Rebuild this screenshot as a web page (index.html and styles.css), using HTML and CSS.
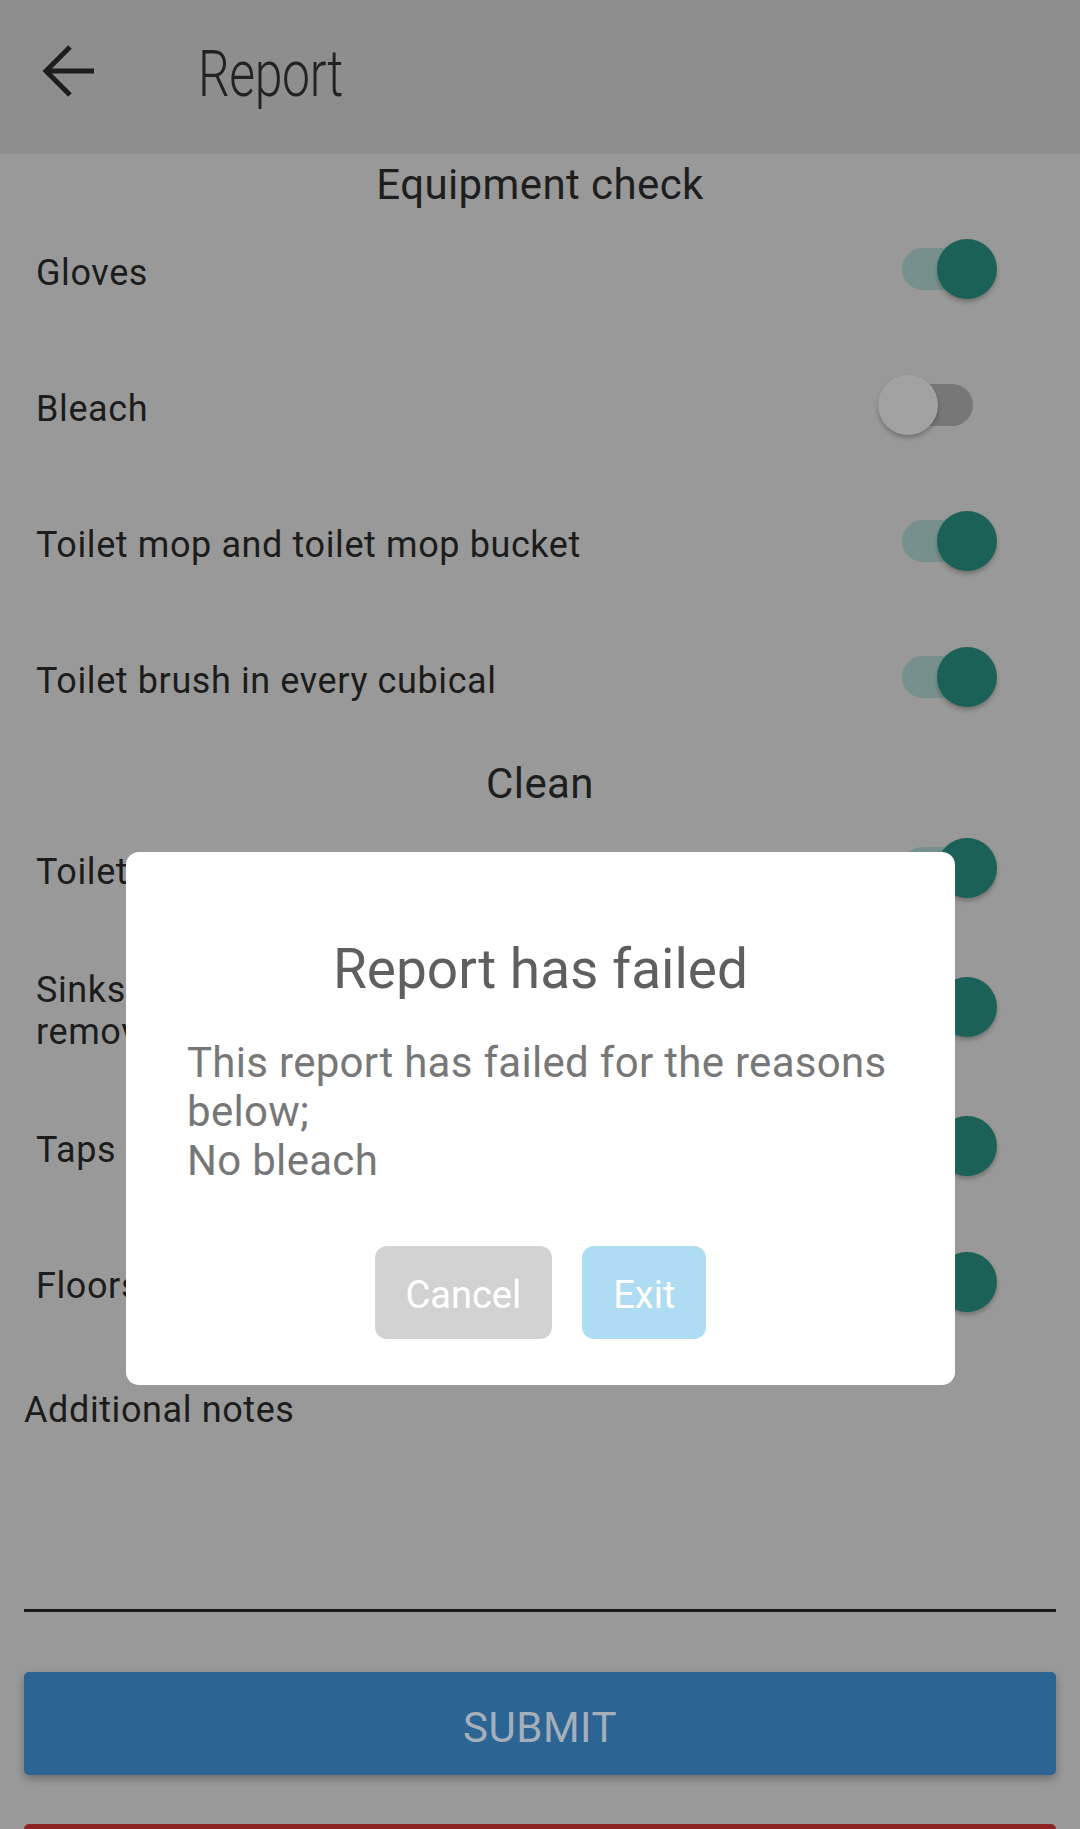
FILE: index.html
```html
<!DOCTYPE html>
<html lang="en">
<head>
<meta charset="utf-8">
<title>Report</title>
<link rel="stylesheet" href="styles.css">
</head>
<body>
<div class="screen">
  <header class="appbar">
    <svg class="back" width="56" height="56" viewBox="0 0 56 56" aria-hidden="true">
      <path d="M4 28 H53 M29 4 L5 28 L29 52" fill="none" stroke="#1d1d1d" stroke-width="5" stroke-linecap="butt" stroke-linejoin="miter"/>
    </svg>
    <h1 class="title">Report</h1>
  </header>

  <main class="content">
    <h2 class="section first">Equipment check</h2>
    <div class="row"><span class="label">Gloves</span><span class="switch on"><span class="track"></span><span class="thumb"></span></span></div>
    <div class="row"><span class="label">Bleach</span><span class="switch off"><span class="track"></span><span class="thumb"></span></span></div>
    <div class="row"><span class="label">Toilet mop and toilet mop bucket</span><span class="switch on"><span class="track"></span><span class="thumb"></span></span></div>
    <div class="row"><span class="label">Toilet brush in every cubical</span><span class="switch on"><span class="track"></span><span class="thumb"></span></span></div>

    <h2 class="section">Clean</h2>
    <div class="row"><span class="label">Toilets</span><span class="switch on"><span class="track"></span><span class="thumb"></span></span></div>
    <div class="row tall"><span class="label">Sinks<br>removed</span><span class="switch on"><span class="track"></span><span class="thumb"></span></span></div>
    <div class="row"><span class="label">Taps c</span><span class="switch on"><span class="track"></span><span class="thumb"></span></span></div>
    <div class="row"><span class="label">Floors</span><span class="switch on"><span class="track"></span><span class="thumb"></span></span></div>

    <div class="notes">
      <div class="notes-label">Additional notes</div>
      <div class="notes-field"></div>
    </div>

    <div class="submit">SUBMIT</div>
    <div class="danger"></div>
  </main>

  <div class="dialog" role="dialog">
    <h3 class="dialog-title">Report has failed</h3>
    <p class="dialog-text">This report has failed for the reasons below;<br>No bleach</p>
    <div class="dialog-actions">
      <span class="btn btn-cancel">Cancel</span>
      <span class="btn btn-exit">Exit</span>
    </div>
  </div>
</div>
</body>
</html>
```

FILE: styles.css
```css
* { box-sizing: border-box; }

html, body {
  margin: 0;
  padding: 0;
  background: #999999;
}

body {
  font-family: Roboto, "Noto Sans", "DejaVu Sans", sans-serif;
  color: #1c1c1c;
}

.screen {
  position: relative;
  width: 1080px;
  height: 1829px;
  overflow: hidden;
  background: #999999;
}

.appbar {
  height: 154px;
  background: #8e8e8e;
  display: flex;
  align-items: center;
  padding-left: 41px;
}

.back {
  display: block;
  margin-top: -12px;
}

.title {
  margin: -4px 0 0 101px;
  font-family: Roboto, sans-serif;
  font-weight: 300;
  font-size: 64px;
  line-height: 1;
  color: #222;
  transform: scaleX(0.78);
  transform-origin: left center;
  letter-spacing: -0.5px;
}

.content {
  display: flex;
  flex-direction: column;
}

.section {
  margin: 0;
  height: 55px;
  padding-top: 17px;
  font-size: 42px;
  line-height: 42px;
  font-weight: 400;
  text-align: center;
  color: #1e1e1e;
  letter-spacing: 0.4px;
}

.section.first {
  height: 48px;
  padding-top: 10px;
}

.row {
  height: 136px;
  display: flex;
  align-items: center;
  justify-content: space-between;
  padding: 0 77px 0 36px;
}

.row.tall {
  height: 142px;
}

.label {
  font-size: 36px;
  line-height: 42px;
  padding-top: 6px;
  color: #1c1c1c;
  letter-spacing: 0.6px;
}

.switch {
  position: relative;
  width: 110px;
  height: 60px;
  flex: none;
  margin-top: -2px;
}

.switch .track {
  position: absolute;
  top: 9px;
  height: 42px;
  border-radius: 21px;
}

.switch .thumb {
  position: absolute;
  top: 0;
  width: 60px;
  height: 60px;
  border-radius: 50%;
  box-shadow: 0 3px 4px rgba(0, 0, 0, 0.25);
}

.switch.on .track {
  left: 9px;
  width: 90px;
  background: #76918d;
}

.switch.on .thumb {
  left: 44px;
  background: #1b6158;
}

.switch.off .track {
  left: -5px;
  width: 85px;
  background: #777777;
}

.switch.off .thumb {
  left: -15px;
  background: #a2a2a2;
}

.notes {
  padding: 38px 24px 0;
}

.notes-label {
  font-size: 36px;
  line-height: 42px;
  color: #1c1c1c;
  letter-spacing: 0.6px;
}

.notes-field {
  height: 181px;
  border-bottom: 3px solid #1a1a1a;
}

.submit {
  margin: 60px 24px 0;
  height: 103px;
  padding-top: 7px;
  border-radius: 5px;
  background: #2c6593;
  box-shadow: 0 4px 8px rgba(0, 0, 0, 0.28);
  display: flex;
  align-items: center;
  justify-content: center;
  font-size: 42px;
  color: #a5afba;
  letter-spacing: 0.5px;
}

.danger {
  margin: 49px 24px 0;
  height: 100px;
  border-radius: 5px;
  background: #8c2424;
}

.dialog {
  position: absolute;
  left: 126px;
  top: 852px;
  width: 829px;
  height: 533px;
  background: #ffffff;
  border-radius: 13px;
  padding: 85px 61px 46px;
  display: flex;
  flex-direction: column;
}

.dialog-title {
  margin: 0;
  font-size: 55px;
  line-height: 64px;
  font-weight: 400;
  text-align: center;
  color: #5f5f5f;
}

.dialog-text {
  margin: 37px 0 0;
  font-size: 42px;
  line-height: 49px;
  color: #777777;
  letter-spacing: 0.3px;
}

.dialog-actions {
  margin-top: auto;
  display: flex;
  justify-content: center;
  gap: 30px;
}

.btn {
  height: 93px;
  padding: 5px 31px 0;
  border-radius: 12px;
  display: flex;
  align-items: center;
  font-size: 38px;
  color: #ffffff;
}

.btn-cancel {
  background: #d2d2d2;
}

.btn-exit {
  background: #aedcf2;
}
```
